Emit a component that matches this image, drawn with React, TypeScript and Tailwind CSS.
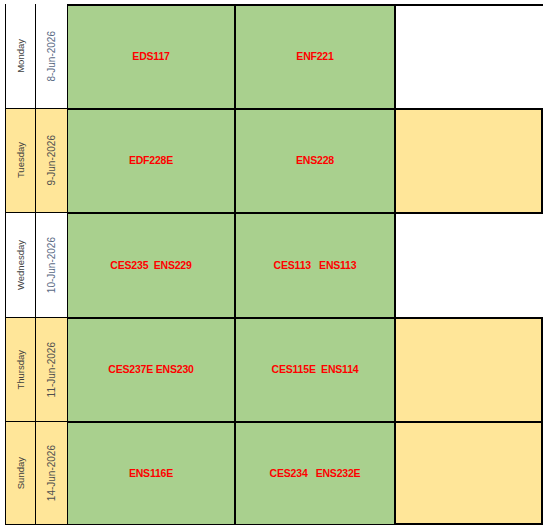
import React from 'react';

type Row = {
  day: string;
  date: string;
  first: string;
  second: string;
  tint: 'white' | 'yellow';
};

const ROWS: Row[] = [
  { day: 'Monday', date: '8-Jun-2026', first: 'EDS117', second: 'ENF221', tint: 'white' },
  { day: 'Tuesday', date: '9-Jun-2026', first: 'EDF228E', second: 'ENS228', tint: 'yellow' },
  { day: 'Wednesday', date: '10-Jun-2026', first: 'CES235\u00a0\u00a0ENS229', second: 'CES113\u00a0\u00a0\u00a0ENS113', tint: 'white' },
  { day: 'Thursday', date: '11-Jun-2026', first: 'CES237E\u00a0ENS230', second: 'CES115E\u00a0\u00a0ENS114', tint: 'yellow' },
  { day: 'Sunday', date: '14-Jun-2026', first: 'ENS116E', second: 'CES234\u00a0\u00a0\u00a0ENS232E', tint: 'yellow' },
];

export default function App() {
  return (
    <div className="h-[527px] w-[554px] bg-white pl-[5px] pt-[4px] font-['Liberation_Sans',Arial,sans-serif]">
      <div className="flex w-[540px] flex-col">
        {ROWS.map((row, index) => {
          const side = row.tint === 'yellow' ? 'bg-[#ffe699]' : 'bg-white';
          const top = index === 0 ? 'border-t-0' : 'border-t';
          const last = index === ROWS.length - 1;
          return (
            <div key={row.day} className={`flex ${index === 2 ? 'h-[105px]' : 'h-[104px]'}`}>
              <div className={`flex w-[30px] items-center justify-center border-l border-black ${top} ${side} ${last ? 'border-b' : ''}`}>
                <span className="rotate-180 text-[9.5px] leading-none text-[#404040] [writing-mode:vertical-rl]">{row.day}</span>
              </div>
              <div className={`flex w-[32px] items-center justify-center border-l border-black ${top} ${side} ${last ? 'border-b' : ''}`}>
                <span className={`rotate-180 text-[10px] leading-none [writing-mode:vertical-rl] ${row.tint === 'white' ? 'text-[#5a6a85]' : 'text-[#505050]'}`}>
                  {row.date}
                </span>
              </div>
              <Course label={row.first} className={`w-[167px] border-l border-t-2 ${last ? 'border-b' : ''}`} />
              <Course label={row.second} className={`w-[160px] border-l-2 border-t-2 ${last ? 'border-b' : ''}`} />
              <div
                className={`w-[149px] border-l-2 border-t-2 border-black ${
                  row.tint === 'yellow' ? 'border-r-2 bg-[#ffe699]' : 'bg-white'
                } ${last ? 'border-b-2' : ''}`}
              />
            </div>
          );
        })}
      </div>
    </div>
  );
}

function Course({ label, className }: { label: string; className: string }) {
  return (
    <div className={`flex items-center justify-center border-black bg-[#a9d08e] ${className}`}>
      <span className="text-[10.5px] font-bold tracking-[-0.2px] text-[#ff0000]">{label}</span>
    </div>
  );
}
